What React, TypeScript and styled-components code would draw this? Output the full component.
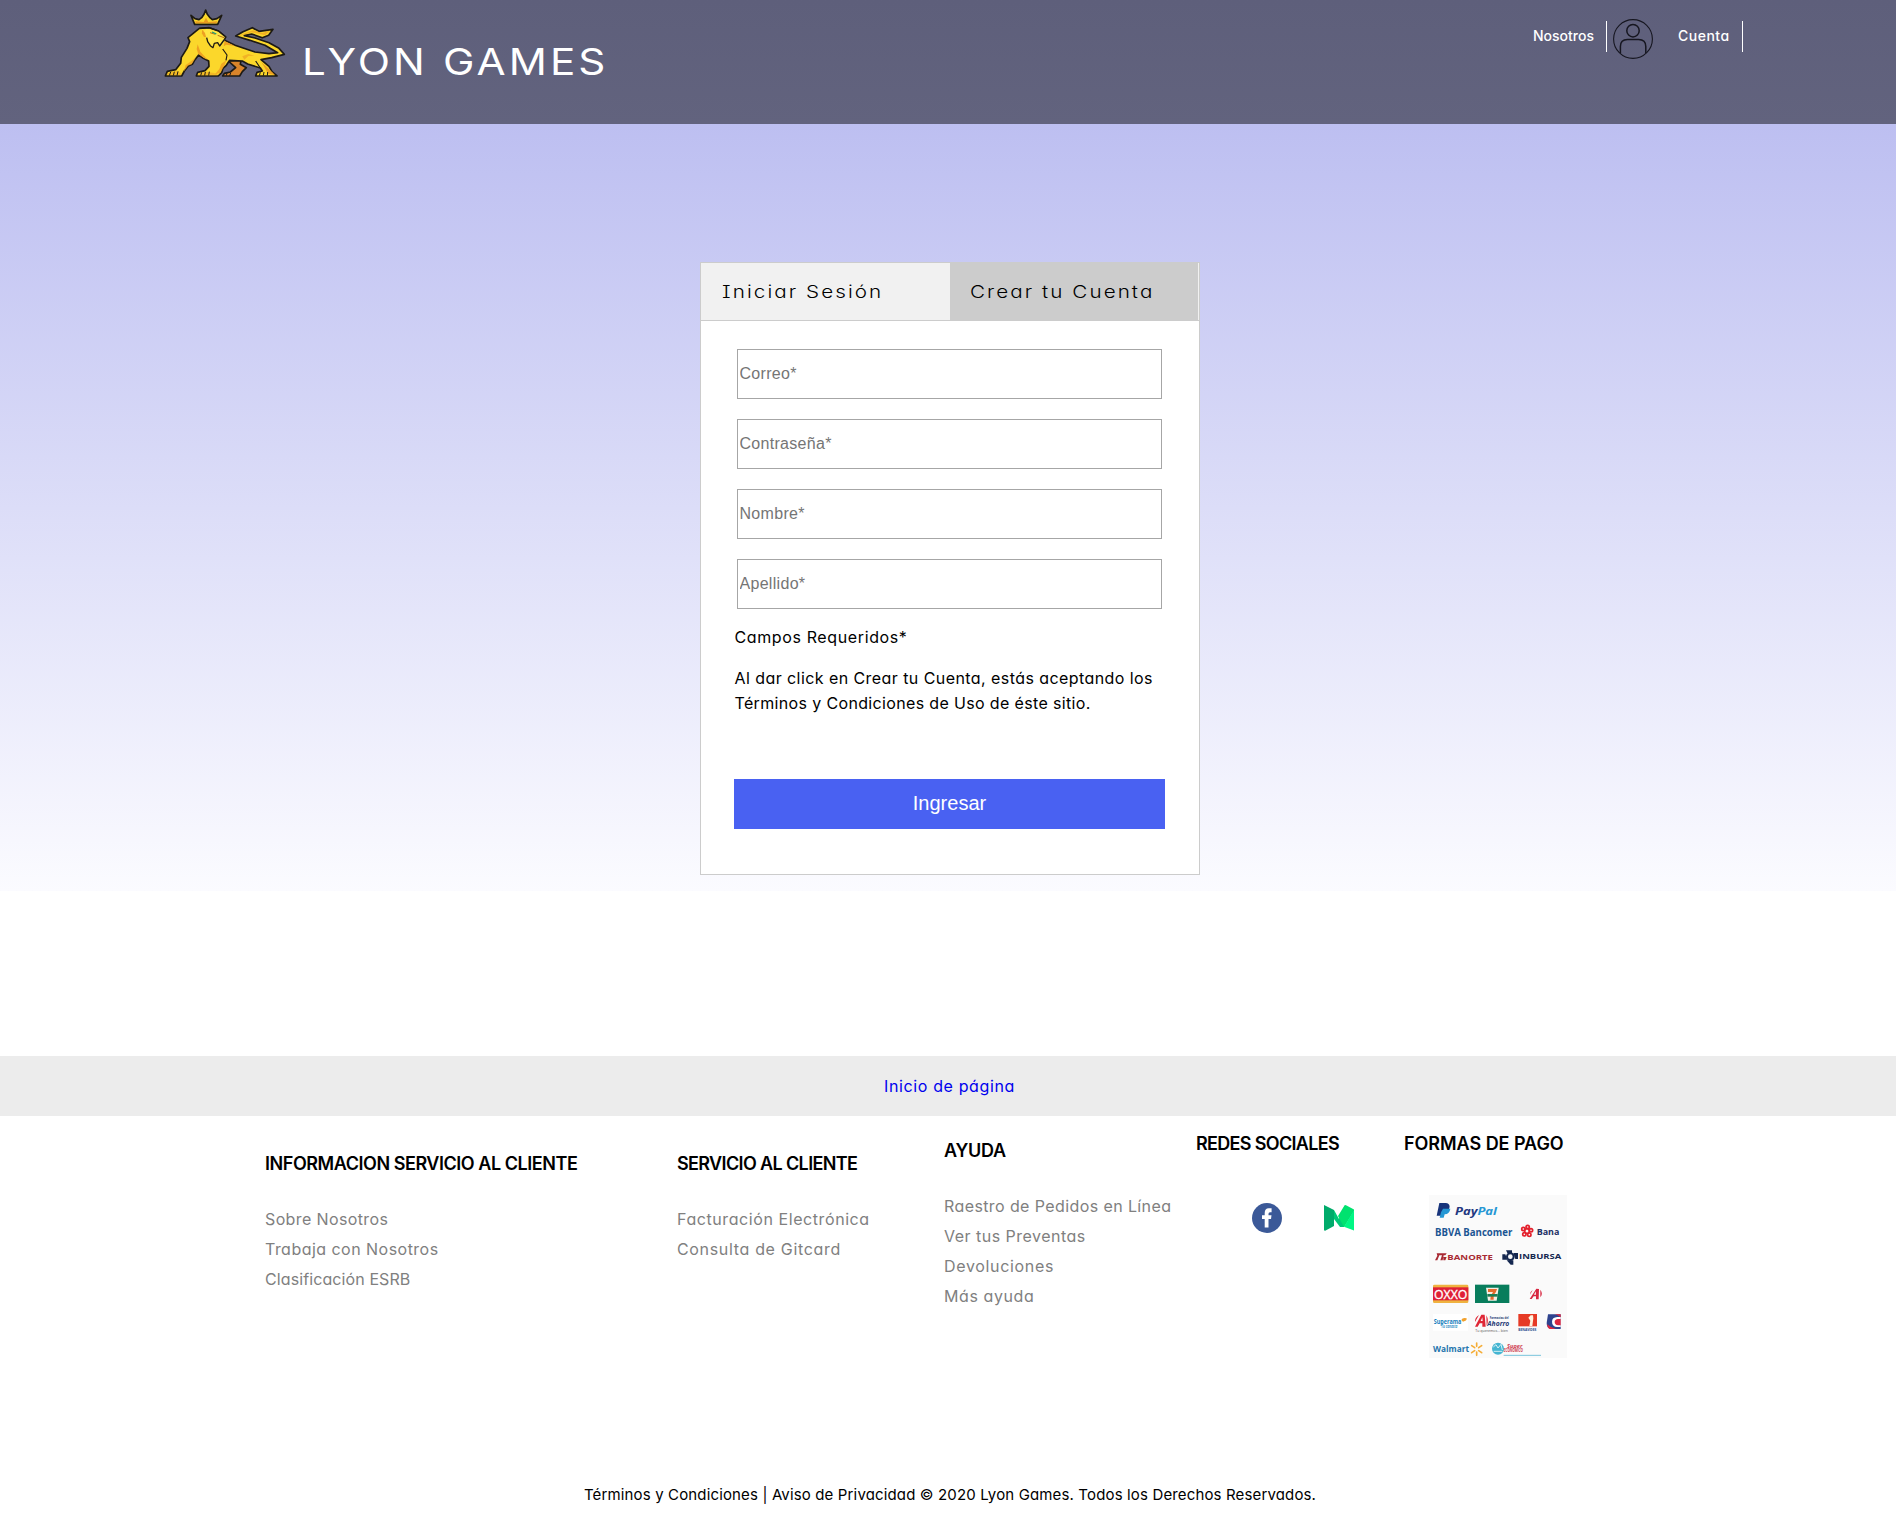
import React from "react";
import styled, { createGlobalStyle } from "styled-components";

const GlobalStyle = createGlobalStyle`
  * { box-sizing: border-box; }
  html, body { margin: 0; }
  body {
    background: #fff;
    color: #000;
    font-family: Inter, "Noto Sans", sans-serif;
    font-feature-settings: "cv11";
    font-size: 16px;
  }
  a { text-decoration: none; color: inherit; }
  h3, p, ul, h1 { margin: 0; padding: 0; }
`;

const Page = styled.div`
  height: 1520px;
  display: flex;
  flex-direction: column;
  overflow: hidden;
`;

const Header = styled.header`
  height: 124px;
  display: flex;
  justify-content: space-between;
  align-items: flex-start;
  padding: 0 153px 0 155px;
  background: linear-gradient(#5e5f7b, #62637e);
`;

const Brand = styled.div`
  display: flex;
  padding-top: 5px;
`;

const BrandName = styled.h1`
  margin: 33px 0 0 4px;
  font-size: 37px;
  line-height: 48px;
  font-weight: 400;
  color: #fff;
  letter-spacing: 2.7px;
  white-space: nowrap;
  transform: scaleX(1.14);
  transform-origin: left;
`;

const Nav = styled.nav`
  display: flex;
  padding-top: 19px;
`;

const NavLink = styled.a<{ $ls: number; $w: number }>`
  height: 31px;
  width: ${(p) => p.$w}px;
  margin-top: 2px;
  border-right: 1px solid #fff;
  font-size: 14px;
  font-weight: 500;
  line-height: 30px;
  color: #fff;
  letter-spacing: ${(p) => p.$ls}px;
  white-space: nowrap;
`;

const Avatar = styled.svg`
  margin: 0 24px 0 6px;
  fill: none;
  stroke: #161620;
`;

const Main = styled.main`
  height: 767px;
  display: flex;
  justify-content: center;
  align-items: flex-start;
  padding: 138px 0 0 4px;
  background: linear-gradient(#bdbff1, #fbfbff);
`;

const Card = styled.section`
  width: 500px;
  height: 613px;
  border: 1px solid #ccc;
  background: #fff;
`;

const Tabs = styled.div`
  display: flex;
  height: 58px;
  background: #f1f1f1;
  border-bottom: 1px solid #ccc;
`;

const Tab = styled.button<{ $active?: boolean; $w: number }>`
  width: ${(p) => p.$w}px;
  border: 0;
  padding: 0 0 1px ${(p) => (p.$active ? 20 : 21)}px;
  text-align: left;
  background: ${(p) => (p.$active ? "#ccc" : "#f1f1f1")};
  font-family: inherit;
  font-feature-settings: "cv11", "cv08";
  font-size: 17.2px;
  font-weight: 300;
  color: #000;
  letter-spacing: 1.72px;
  white-space: nowrap;
`;

const TabLabel = styled.span`
  display: inline-block;
  transform: scaleX(1.2);
  transform-origin: left;
`;

const Form = styled.form`
  display: flex;
  flex-direction: column;
  padding: 28px 34px 0 33px;
`;

const Input = styled.input`
  width: 425px;
  height: 50px;
  margin: 0 0 20px 3px;
  padding: 1px 1.5px;
  border: 1px solid #a6a6a6;
  font: 16px "Liberation Sans", Arial, sans-serif;
  letter-spacing: 0.3px;
  &::placeholder { color: #757575; opacity: 1; }
`;

const Note = styled.p<{ $top: number }>`
  margin-top: ${(p) => p.$top}px;
  padding-left: 0.5px;
  line-height: 25px;
  font-size: 16px;
  white-space: nowrap;
`;

const Line = styled.span<{ $ls: number }>`
  letter-spacing: ${(p) => p.$ls}px;
`;

const Submit = styled.button`
  height: 50px;
  margin-top: 63px;
  padding: 0 0 2px;
  border: 0;
  background: #4961f2;
  color: #fff;
  font: 20px "Liberation Sans", Arial, sans-serif;
`;

const BackToTop = styled.div`
  height: 60px;
  margin-top: 165px;
  padding-left: 3px;
  background: #ececec;
  color: #0000ee;
  text-align: center;
  line-height: 61px;
`;

const FooterColumns = styled.footer`
  height: 364px;
  display: flex;
  align-items: flex-start;
  padding-left: 265px;
`;

const Column = styled.div<{ $w: number; $top: number }>`
  width: ${(p) => p.$w}px;
  flex: none;
  padding-top: ${(p) => p.$top}px;
`;

const Heading = styled.h3<{ $ls: number }>`
  height: 26px;
  font-size: 18px;
  font-weight: 600;
  line-height: 26px;
  white-space: nowrap;
  letter-spacing: ${(p) => p.$ls}px;
`;

const Links = styled.ul`
  margin-top: 27px;
  list-style: none;
  color: #808080;
  font-size: 16px;
  line-height: 30px;
  white-space: nowrap;
`;

const Social = styled.div`
  display: flex;
  gap: 42px;
  margin: 46px 0 0 56px;
`;

const Payments = styled.svg`
  display: block;
  margin: 38px 0 0 25px;
  background: #fafafa;
`;

const Legal = styled.p`
  padding-left: 4px;
  text-align: center;
  font-size: 15px;
  line-height: 30px;
`;

const Lion = () => (
  <svg width="143" height="80" viewBox="0 0 429 240" fill="#fbd72b" stroke="#1d1a14" strokeWidth="5" strokeLinejoin="round">
    <path d="M108 31 L120 41 L132 44 L141 37 L147 28 L152 15 L157 28 L164 37 L172 44 L186 41 L200 31 L188 58 L119 58Z" />
    <path d="M121 49 L146 51 L153 38 L160 51 L187 49 L184 55 L122 55Z" fill="#e99a1f" stroke="none" />
    <path d="M220 168 L242 188 L226 201 L208 205 L203 213 L254 213 L262 200 L274 188 L256 178 L258 166Z" fill="#d9842a" />
    <path d="M133 70 L163 68 L190 78 L212 96 L207 105 L240 121 L300 141 L342 146 L368 143 L330 121 L285 106 L242 93 L264 80 L292 68 L312 79 L354 73 L341 91 L322 98 L290 87 L268 92 L300 99 L342 113 L372 130 L388 148 L350 158 L318 164 L342 184 L351 200 L366 213 L302 213 L306 202 L322 198 L316 189 L278 177 L262 168 L224 166 L214 181 L204 190 L200 203 L190 213 L124 213 L128 202 L150 197 L162 184 L161 168 L145 160 L131 150 L120 164 L112 178 L100 183 L88 198 L80 213 L31 213 L37 199 L62 194 L77 175 L79 157 L96 130 L104 110 L99 98Z" />
    <g stroke="none" fill="#eda022">
      <path d="M128 118 L136 140 L158 164 L148 160 L130 147 L125 132Z" />
      <path d="M122 158 L110 178 L99 182 L86 200 L92 180 L106 170Z" opacity=".8" />
      <path d="M209 108 L240 123 L214 119 L206 124Z" />
      <path d="M214 166 L208 182 L196 203 L180 208 L193 192 L199 176Z" opacity=".85" />
      <path d="M262 154 L280 147 L298 152 L280 153 L268 164Z" opacity=".65" />
      <path d="M318 170 L352 202 L360 210 L339 206 L328 186Z" />
      <path d="M250 92 L294 76 L322 84 L345 77 L330 91 L290 82 L264 90Z" opacity=".7" />
      <path d="M35 210 L40 203 L66 198 L80 205 L78 211Z M128 211 L133 204 L156 200 L188 206 L186 211Z" opacity=".55" />
    </g>
    <path d="M138 82 L151 90 L157 108 L161 118 L173 128 L176 115 L185 111 L194 121 L206 112 L212 96 L190 79 L155 72Z" fill="#ffe544" stroke="none" />
    <path d="M142 74 L150 84 L153 96 L147 96 L140 84Z" fill="#eda022" stroke="none" />
    <path d="M155 98 L158 110 L166 122 L174 128 L178 115 L188 113 L194 123 L207 105" fill="none" strokeWidth="4" />
    <path d="M133 70 L163 68 L190 78 L212 96 L207 105" fill="none" strokeWidth="4" />
    <path d="M165 83 L181 88 M188 91 L207 98" fill="none" strokeWidth="3" stroke="#b86f18" />
    <path d="M171 81 L184 87" stroke="#1b9b78" strokeWidth="4" />
    <path d="M203 132 L216 150 L213 166 M302 168 L316 189" fill="none" strokeWidth="3.5" />
    <path d="M47 201 L43 212 M58 200 L55 212 M69 199 L66 212 M140 202 L137 212 M151 201 L149 212 M163 200 L161 212 M216 204 L214 212 M227 204 L224 212 M316 202 L313 212 M327 201 L325 212 M338 201 L337 212" fill="none" strokeWidth="3" />
  </svg>
);

const UserIcon = () => (
  <Avatar width="41" height="41" viewBox="0 0 41 41" strokeWidth="1.1">
    <circle cx="20" cy="20" r="19.4" />
    <circle cx="20" cy="11.7" r="6.2" strokeWidth="1.5" />
    <path d="M7.4 34V27.5Q7.4 20.4 14.5 20.4H25.5Q32.8 20.4 32.8 27.5V34" strokeWidth="1.5" />
  </Avatar>
);

const Facebook = () => (
  <svg width="30" height="30" viewBox="0 0 30 30">
    <circle cx="15" cy="15" r="15" fill="#3b5998" />
    <path d="M12.7 24.5V16H10V12.3H12.7V9.9Q12.7 5.2 16.8 5.2H19.6V9.2H18Q16.5 9.2 16.5 10.7V12.3H19.5L19 16H16.5V24.5Z" fill="#fff" />
  </svg>
);

const MediumLogo = () => (
  <svg width="30" height="30" viewBox="0 0 30 30">
    <path d="M0 2L10 7V23L1.2 27.8Q0 28 0 26.5Z" fill="#00ab6b" />
    <path d="M10 7L15 16L20.5 3L30 7V8L20 24L16 24L10 16Z" fill="#00c878" />
    <path d="M20.5 2.5Q21 1.8 22 2.3L30 6.5L20 24L14 13Z" fill="#00e26f" />
    <path d="M30 7V27.5L20 23.8Z" fill="#00f784" />
  </svg>
);

const PaymentLogos = () => (
  <Payments width="138" height="163" viewBox="27 30 414 489" fontFamily="Open Sans, Noto Sans, sans-serif" fontWeight="700">
    <path d="M58 54H78Q92 56 88 70Q84 82 69 82L66 92H50Z" fill="#17347b" />
    <path d="M69 71H91Q89 87 74 88L71 98H59L63 82Z" fill="#2597d4" />
    <text x="105" y="91" fontSize="32" fontStyle="italic" textLength="126" lengthAdjust="spacingAndGlyphs"><tspan fill="#22377f">Pay</tspan><tspan fill="#2597d4">Pal</tspan></text>
    <text x="45" y="154" fontSize="31" fill="#1b5593" textLength="232" lengthAdjust="spacingAndGlyphs">BBVA Bancomer</text>
    <g fill="none" stroke="#e3202c" strokeWidth="5">
      <circle cx="321" cy="138" r="7" />
      <circle cx="310" cy="132" r="5" /><circle cx="323" cy="126" r="5" /><circle cx="333" cy="136" r="5" /><circle cx="328" cy="149" r="5" /><circle cx="313" cy="148" r="5" />
    </g>
    <text x="350" y="150" fontSize="28" fill="#1c3065" textLength="68" lengthAdjust="spacingAndGlyphs">Bana</text>
    <path d="M50 205H80L76 211H71L68 226H61L66 211H58L52 226H45L52 212Z M70 216H80L76 226H70Z" fill="#a82a33" />
    <text x="82" y="224" fontSize="23" fill="#a82a33" textLength="137" lengthAdjust="spacingAndGlyphs">BANORTE</text>
    <path d="M258 196H276V204H262Z M280 204H294V222H286Z M247 208H256L262 224H247Z M260 226H280V239H272Z" fill="#14274f" />
    <circle cx="271" cy="215" r="10" fill="none" stroke="#14274f" strokeWidth="6" />
    <text x="297" y="222" fontSize="22" fill="#14274f" textLength="127" lengthAdjust="spacingAndGlyphs">INBURSA</text>
    <rect x="39" y="299" width="106" height="55" rx="4" fill="#efb340" />
    <rect x="39" y="307" width="106" height="39" fill="#df2036" />
    <text x="42" y="341" fontSize="39" fontWeight="400" fill="#fff" stroke="#fff" textLength="100" lengthAdjust="spacingAndGlyphs">OXXO</text>
    <rect x="165" y="299" width="103" height="55" fill="#087d5c" />
    <path d="M198 308H236L230 347H204Z" fill="#f4efe5" />
    <path d="M204 312H231Q229 323 221 330V344H211Q211 331 219 321H204Z" fill="#e56b2d" />
    <rect x="202" y="327" width="31" height="8" fill="#1c7d53" />
    <path d="M349 311L357 312L356 343H348V334H341L335 342H329Z M347 319L342 329H348Z M361 314Q370 326 361 337Z M338 315L330 329Q329 321 338 315Z" fill="#d82640" fillRule="evenodd" />
    <rect x="39" y="387" width="105" height="50" fill="#fff" />
    <text x="41" y="416" fontSize="19" fill="#1680bd" textLength="83" lengthAdjust="spacingAndGlyphs">Superama</text>
    <path d="M124 405Q127 397 140 400Q141 408 129 410Z" fill="#f2a12c" />
    <text x="64" y="430" fontSize="13" fontStyle="italic" fill="#3996c7" textLength="48" lengthAdjust="spacingAndGlyphs">Tu canasta</text>
    <path d="M184 389H194L197 425H187V415H179L173 425H165Z M187 397L182 408H188Z M199 391Q208 407 200 422Z M177 390Q164 398 165 411Z" fill="#df2635" fillRule="evenodd" />
    <text x="209" y="402" fontSize="12" fill="#293c76" textLength="57" lengthAdjust="spacingAndGlyphs">Farmacias del</text>
    <text x="202" y="422" fontSize="23" fontStyle="italic" fill="#293c76" textLength="66" lengthAdjust="spacingAndGlyphs">Ahorro</text>
    <text x="166" y="440" fontSize="10" fontWeight="400" fill="#555" textLength="98" lengthAdjust="spacingAndGlyphs">Tu queremos... bien</text>
    <rect x="295" y="387" width="56" height="37" fill="#e63a25" />
    <path d="M328 423L331 407L325 398L332 391L339 391L340 400L337 423Z" fill="#fff3de" />
    <text x="295" y="437" fontSize="10" fill="#27498a" textLength="54" lengthAdjust="spacingAndGlyphs">BENAVIDES</text>
    <path d="M384 388H422V432H393Q380 430 380 414Z" fill="#2e438e" />
    <path d="M422 388H404Q420 392 422 400Z M382 418Q392 428 408 432H389Q381 428 382 418Z" fill="#db2740" />
    <path d="M422 396H412Q396 397 396 410Q396 425 412 426H422Z" fill="#fff" />
    <path d="M422 402H414Q404 403 404 411Q404 420 414 421H422Z" fill="#db2740" />
    <text x="39" y="502" fontSize="28" fill="#2474ad" textLength="108" lengthAdjust="spacingAndGlyphs">Walmart</text>
    <path d="M170 484V474M176 488L185 482M176 497L185 503M170 501V511M164 497L155 503M164 488L155 482" stroke="#f5ad37" strokeWidth="5" strokeLinecap="round" />
    <circle cx="234" cy="491" r="18" fill="#45b5d2" />
    <path d="M220 486L228 479L234 489L243 478L247 495M221 499H247" fill="none" stroke="#d7f1f5" strokeWidth="3" />
    <text x="261" y="489" fontSize="15" fontStyle="italic" fill="#cf4152" textLength="46" lengthAdjust="spacingAndGlyphs">Super</text>
    <text x="251" y="501" fontSize="15" fontStyle="italic" fill="#cf4152" textLength="58" lengthAdjust="spacingAndGlyphs">ECONOMICO</text>
    <path d="M251 511H363" stroke="#7ac4dc" strokeWidth="3" />
  </Payments>
);

type LinkItem = { text: string; ls: number };

const LinkList = ({ items }: { items: LinkItem[] }) => (
  <Links>
    {items.map((item) => (
      <li key={item.text}>
        <Line as="a" href="#" $ls={item.ls}>{item.text}</Line>
      </li>
    ))}
  </Links>
);

const infoLinks: LinkItem[] = [
  { text: "Sobre Nosotros", ls: 0.38 },
  { text: "Trabaja con Nosotros", ls: 0.47 },
  { text: "Clasificación ESRB", ls: 0.1 },
];
const serviceLinks: LinkItem[] = [
  { text: "Facturación Electrónica", ls: 0.58 },
  { text: "Consulta de Gitcard", ls: 0.67 },
];
const helpLinks: LinkItem[] = [
  { text: "Raestro de Pedidos en Línea", ls: 0.4 },
  { text: "Ver tus Preventas", ls: 0.48 },
  { text: "Devoluciones", ls: 0.67 },
  { text: "Más ayuda", ls: 0.58 },
];
const fields = ["Correo*", "Contraseña*", "Nombre*", "Apellido*"];

export default function App() {
  return (
    <>
      <GlobalStyle />
      <Page>
        <Header>
          <Brand>
            <Lion />
            <BrandName>LYON GAMES</BrandName>
          </Brand>
          <Nav>
            <NavLink href="#" $ls={0} $w={74}>Nosotros</NavLink>
            <UserIcon />
            <NavLink href="#" $ls={0.5} $w={65}>Cuenta</NavLink>
          </Nav>
        </Header>
        <Main>
          <Card>
            <Tabs>
              <Tab $w={249}><TabLabel>Iniciar Sesión</TabLabel></Tab>
              <Tab $w={248} $active><TabLabel>Crear tu Cuenta</TabLabel></Tab>
            </Tabs>
            <Form>
              {fields.map((f) => <Input key={f} placeholder={f} />)}
              <Note $top={-4}><Line $ls={0.62}>Campos Requeridos*</Line></Note>
              <Note $top={16}>
                <Line $ls={0.43}>Al dar click en Crear tu Cuenta, estás aceptando los</Line><br />
                <Line $ls={0.35}>Términos y Condiciones de Uso de éste sitio.</Line>
              </Note>
              <Submit type="button">Ingresar</Submit>
            </Form>
          </Card>
        </Main>
        <BackToTop><Line as="a" href="#" $ls={0.62}>Inicio de página</Line></BackToTop>
        <FooterColumns>
          <Column $w={412} $top={35}>
            <Heading $ls={-0.45}>INFORMACION SERVICIO AL CLIENTE</Heading>
            <LinkList items={infoLinks} />
          </Column>
          <Column $w={267} $top={35}>
            <Heading $ls={-0.63}>SERVICIO AL CLIENTE</Heading>
            <LinkList items={serviceLinks} />
          </Column>
          <Column $w={252} $top={22}>
            <Heading $ls={-0.3}>AYUDA</Heading>
            <LinkList items={helpLinks} />
          </Column>
          <Column $w={208} $top={15}>
            <Heading $ls={-0.68}>REDES SOCIALES</Heading>
            <Social><Facebook /><MediumLogo /></Social>
          </Column>
          <Column $w={200} $top={15}>
            <Heading $ls={-0.04}>FORMAS DE PAGO</Heading>
            <PaymentLogos />
          </Column>
        </FooterColumns>
        <Legal><Line $ls={0.145}>Términos y Condiciones | Aviso de Privacidad © 2020 Lyon Games. Todos los Derechos Reservados.</Line></Legal>
      </Page>
    </>
  );
}
